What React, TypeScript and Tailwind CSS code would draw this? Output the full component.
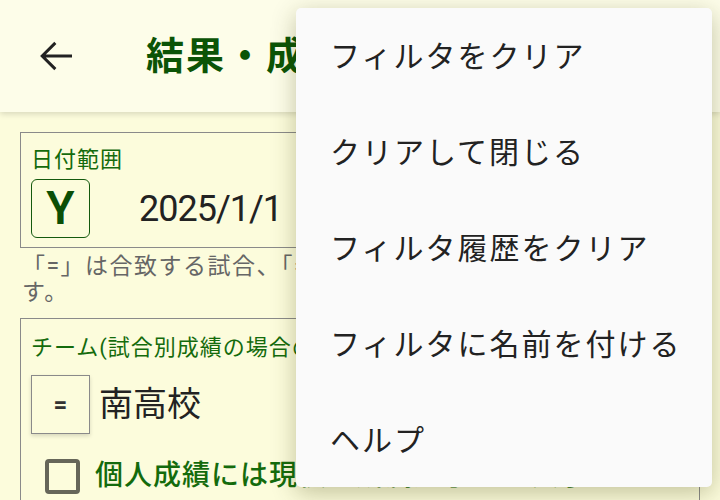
export default function App() {
  const menu = [
    "フィルタをクリア",
    "クリアして閉じる",
    "フィルタ履歴をクリア",
    "フィルタに名前を付ける",
    "ヘルプ",
  ];

  return (
    <div
      className="relative w-[720px] h-[500px] overflow-hidden bg-[#fcfcdc]"
      style={{ fontFamily: "Roboto, 'Noto Sans CJK JP', sans-serif" }}
    >
      {/* app bar */}
      <header className="h-[112px] flex items-center bg-[#fdfde9] shadow-[0_2px_6px_rgba(0,0,0,0.15)] relative z-10">
        <div className="w-[146px] pl-[32px] flex items-center">
          <svg width="48" height="48" viewBox="0 0 24 24" fill="#222">
            <path d="M20 11.25H6.9l5.3-5.3L11.15 4.9 4.05 12l7.1 7.1 1.05-1.05-5.3-5.3H20z" />
          </svg>
        </div>
        <h1 className="text-[38px] font-bold tracking-[2px] text-[#0b5406] whitespace-nowrap">
          結果・成績フィルタ
        </h1>
      </header>

      {/* body */}
      <main className="px-5 pt-5">
        <section className="border border-[#8a8a8a] h-[116px] pl-[10px] pt-[12px]">
          <div className="text-[22px] leading-[30px] tracking-[1px] text-[#146b0c]">日付範囲</div>
          <div className="flex items-center mt-[4px]">
            <div className="w-[59px] h-[59px] rounded-md border-[1.5px] border-[#145a0e] flex items-center justify-center text-[46px] font-semibold text-[#0b4f06]">
              Y
            </div>
            <div className="ml-[49px] text-[36px] tracking-[-1px] text-[#222]">2025/1/1</div>
          </div>
        </section>

        <p className="mt-[6px] pl-[2px] text-[23px] leading-[26px] tracking-[1.5px] text-[#666] whitespace-nowrap">
          「=」は合致する試合、「≠」は合致しない試合を抽出しま
          <br />
          す。
        </p>

        <section className="mt-[12px] border border-[#8a8a8a] h-[200px] pl-[10px] pt-[14px]">
          <div className="text-[22px] leading-[30px] tracking-[1px] text-[#146b0c] whitespace-nowrap">
            チーム(試合別成績の場合のみ)
          </div>
          <div className="flex items-center mt-[12px]">
            <div className="w-[59px] h-[59px] border border-[#8a8a8a] shadow-[0_2px_4px_rgba(0,0,0,0.15)] flex items-center justify-center text-[24px] font-bold text-[#333]">
              =
            </div>
            <div className="ml-[9px] text-[34px] text-[#222]">南高校</div>
          </div>
          <div className="flex items-center mt-[24px] pl-[14px]">
            <div className="w-[35px] h-[35px] rounded-[4px] border-[4px] border-[#666659] shrink-0" />
            <div className="ml-[15px] text-[28px] leading-[36px] font-medium tracking-[1px] text-[#146b0c] whitespace-nowrap">
              個人成績には現役の所属選手のみ表示
            </div>
          </div>
        </section>
      </main>

      {/* overflow menu */}
      <div className="absolute left-[296px] top-[8px] w-[416px] h-[479px] rounded-[5px] bg-[#fafafa] shadow-[0_6px_24px_rgba(60,60,0,0.3)] z-20">
        {menu.map((m) => (
          <div key={m} className="h-[96px] flex items-center pl-[34px] text-[30px] tracking-[2px] text-[#222] whitespace-nowrap">
            {m}
          </div>
        ))}
      </div>
    </div>
  );
}
